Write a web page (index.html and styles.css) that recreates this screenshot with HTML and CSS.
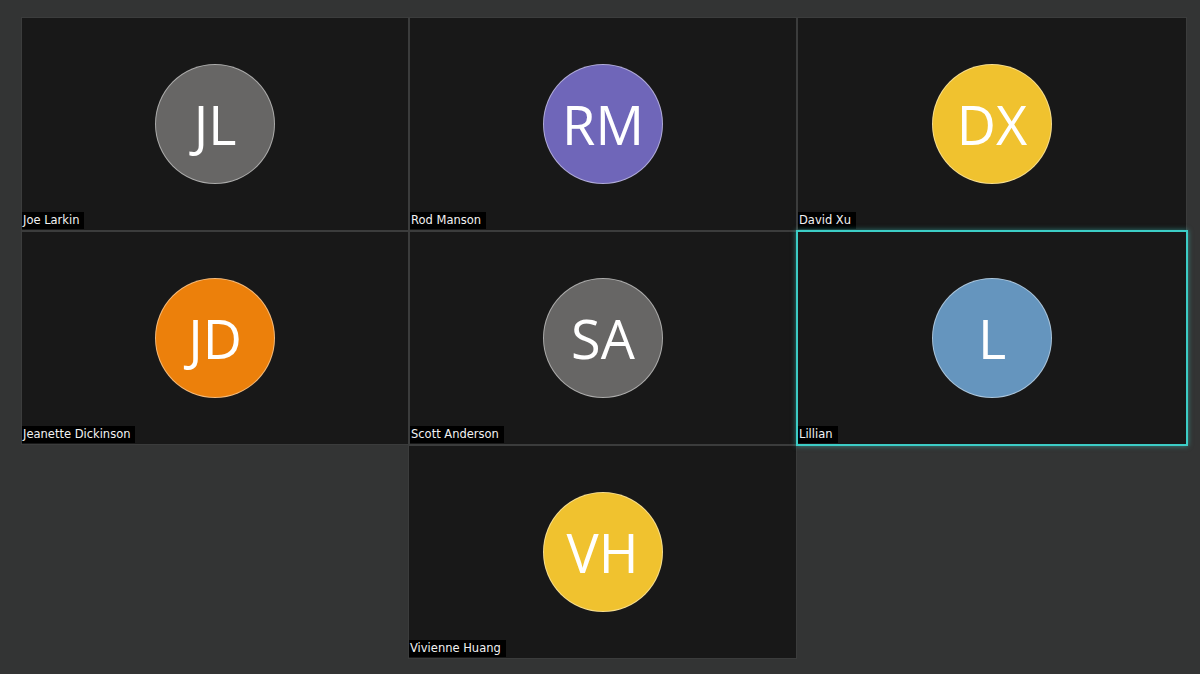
FILE: index.html
```html
<!DOCTYPE html>
<html>
<head>
<meta charset="utf-8">
<link rel="stylesheet" href="styles.css">
</head>
<body>
<div class="stage">
  <div class="grid">
    <div class="tile"><div class="avatar grey">JL</div><span class="name">Joe Larkin</span></div>
    <div class="tile"><div class="avatar purple">RM</div><span class="name">Rod Manson</span></div>
    <div class="tile"><div class="avatar yellow">DX</div><span class="name">David Xu</span></div>
    <div class="tile"><div class="avatar orange">JD</div><span class="name">Jeanette Dickinson</span></div>
    <div class="tile"><div class="avatar grey">SA</div><span class="name">Scott Anderson</span></div>
    <div class="tile active"><div class="avatar blue">L</div><span class="name">Lillian</span></div>
    <div class="tile col2"><div class="avatar yellow">VH</div><span class="name">Vivienne Huang</span></div>
  </div>
</div>
</body>
</html>
```
FILE: styles.css
```css
html, body {
  margin: 0;
  padding: 0;
  background: #333434;
  width: 1200px;
  height: 674px;
  overflow: hidden;
}
.stage {
  padding: 18px 0 0 22px;
}
.grid {
  display: grid;
  grid-template-columns: 386px 386px 388px;
  grid-template-rows: 212px 212px 212px;
  gap: 2px;
}
.tile {
  position: relative;
  background: #181818;
  box-shadow: 0 0 0 1px #3b3c3c;
  display: flex;
  align-items: center;
  justify-content: center;
}
.tile.col2 {
  grid-column: 2;
  margin-left: -1px;
}
.tile.active {
  box-shadow: 0 0 0 2px #3ccdc6, 0 0 5px 2px rgba(60, 205, 198, 0.55);
  z-index: 1;
}
.avatar {
  width: 118px;
  height: 118px;
  border-radius: 50%;
  border: 1px solid rgba(255, 255, 255, 0.45);
  display: flex;
  align-items: center;
  justify-content: center;
  color: #ffffff;
  font-family: "Open Sans", "Noto Sans", sans-serif;
  font-size: 54px;
  letter-spacing: 0px;
  line-height: 1;
  padding-bottom: 0;
  box-sizing: content-box;
}
.grey { background: #676665; }
.purple { background: #6f66b9; }
.yellow { background: #f0c22f; }
.orange { background: #ec800b; }
.blue { background: #6595be; }
.name {
  position: absolute;
  left: 0;
  bottom: 1px;
  background: #000000;
  color: #f2f2f2;
  font-family: "DejaVu Sans", sans-serif;
  font-size: 11.5px;
  line-height: 17px;
  padding: 0 5px 0 1px;
}
```
